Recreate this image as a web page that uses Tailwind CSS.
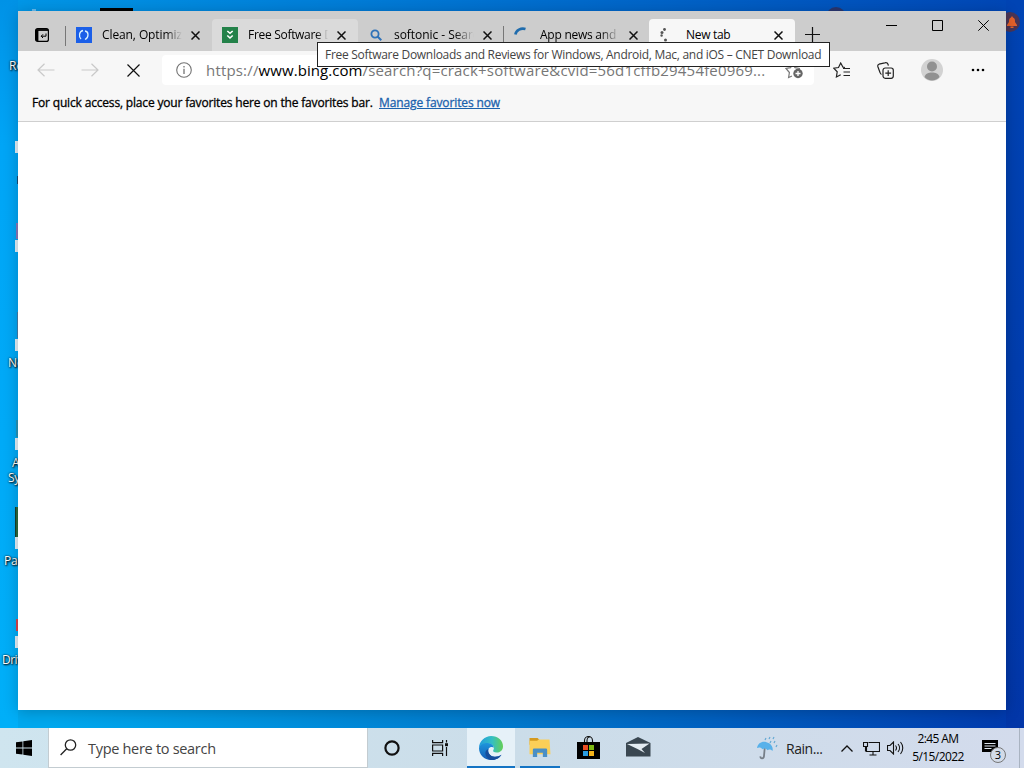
<!DOCTYPE html>
<html lang="en">
<head>
    <meta charset="UTF-8">
    <meta name="viewport" content="width=device-width, initial-scale=1.0">
    <title>New tab</title>
    <script src="https://cdn.jsdelivr.net/npm/@tailwindcss/browser@4"></script>
</head>
<body class="relative w-[1024px] h-[768px] overflow-hidden flex flex-col font-['Open_Sans','Noto_Sans',sans-serif] text-black">

<!-- Desktop -->
<main class="relative h-[728px] overflow-hidden bg-linear-to-r from-[#00a8ee] from-5% via-[#0078cc] via-50% to-[#0038ad]">
    <div class="absolute inset-x-0 top-0 h-[11px] bg-linear-to-r from-[#0098e8] via-[#0078d5] via-40% to-[#0045b5]"></div>
    <div class="absolute left-0 top-0 w-[18px] h-[728px] bg-linear-to-b from-[#0092e6] via-[#00a5f6] via-20% to-[#00aff8]"></div>
    <div class="absolute right-0 top-0 w-[18px] h-[728px] bg-linear-to-b from-[#0044b4] to-[#0236a8]"></div>

    <!-- Desktop icons -->
    <div class="absolute left-[100px] top-[8px] w-[33px] h-[3px] bg-black"></div>
    <div class="absolute left-[32px] top-[9px] w-[4px] h-[2px] bg-[#65bcf0]"></div>
    <div class="absolute left-[826px] top-[7px] size-5 rounded-full bg-[#29366f]"></div>
    <div class="absolute left-[1000px] top-[12px] size-5 rounded-full bg-[#4b3555] flex items-center justify-center pl-1">
        <svg class="w-3 h-3" viewBox="0 0 12 12"><path d="M6 0 7 1.5C9 2 9 4 9 6l2 3v1H1V9l2-3c0-2 0-4 2-4.500zM4.500 10.500h3V12h-3z" fill="#e8622a"/></svg>
    </div>
    <div class="absolute left-0 top-0 w-[60px] h-[728px] text-[12px] leading-[15px] text-white whitespace-nowrap [text-shadow:1px_1px_2px_#000,0_0_2px_#000]">
        <span class="absolute left-[9px] top-[58px]">Re</span>
        <span class="absolute left-[8px] top-[355px]">Ne</span>
        <span class="absolute left-[12px] top-[455px]">Ad</span>
        <span class="absolute left-[8px] top-[470px] tracking-[-0.3px]">Sys</span>
        <span class="absolute left-[4px] top-[553px] tracking-[-0.3px]">Pan</span>
        <span class="absolute left-[2px] top-[652px] tracking-[-0.5px]">Driv</span>
        <div class="absolute left-[15px] top-[141px] w-3 h-3 bg-[#e4f0f8]"></div>
        <div class="absolute left-[17px] top-[176px] w-3 h-2 bg-[#174b78]"></div>
        <div class="absolute left-[16px] top-[223px] w-3 h-4 bg-[#8a78b8]"></div>
        <div class="absolute left-[15px] top-[240px] w-3 h-3 bg-[#e4f0f8]"></div>
        <div class="absolute left-[17px] top-[312px] w-3 h-[26px] bg-[#447eab]"></div>
        <div class="absolute left-[15px] top-[339px] w-3 h-3 bg-[#e4f0f8]"></div>
        <div class="absolute left-[16px] top-[420px] w-3 h-[17px] bg-[#2795b8]"></div>
        <div class="absolute left-[15px] top-[438px] w-3 h-3 bg-[#e4f0f8]"></div>
        <div class="absolute left-[15px] top-[507px] w-3 h-[30px] bg-[#2c6a3c] border-l border-[#173f2c]"></div>
        <div class="absolute left-[15px] top-[537px] w-3 h-3 bg-[#e4f0f8]"></div>
        <div class="absolute left-[16px] top-[619px] w-3 h-3 bg-[#d9444c]"></div>
        <div class="absolute left-[15px] top-[636px] w-3 h-3 bg-[#e4f0f8]"></div>
    </div>

    <!-- Browser window -->
    <section class="absolute left-[18px] top-[11px] w-[988px] h-[699px] bg-white flex flex-col shadow-[0_2px_14px_rgba(0,0,0,0.22)]">

        <!-- Tab strip -->
        <div class="flex h-10 bg-[#cdcdcd] shrink-0 text-[12px]">
            <div class="w-12 h-full pt-[17px] pl-[17px] relative">
                <svg class="w-[14px] h-[14px]" viewBox="0 0 14 14" fill="none" stroke="#000"><rect x=".6" y=".6" width="12.800" height="12.800" rx="2" stroke-width="1.200"/><path d="M1 2h12" stroke-width="1.800"/><path d="M2.200 2v11" stroke-width="2.400"/><path d="M11 5.500v2.700H6.200M8 6.300 6.200 8.200 8 10"/></svg>
                <div class="absolute right-0 top-[15px] w-px h-5 bg-[#777]"></div>
            </div>
            <div class="w-[146px] pt-2 flex">
                <div class="flex items-center h-8 w-full pl-[10px]">
                    <svg class="size-4 shrink-0" viewBox="0 0 16 16"><path d="M0 0h16v16H0z" fill="#1b5fe8"/><path d="M7 3.500C3 4.500 2.500 9.500 5 12M9 4c4 .5 4 6.500 0 8.500" fill="none" stroke="#d8f1ff" stroke-width="1.300"/></svg>
                    <span class="ml-[10px] w-[80px] overflow-hidden whitespace-nowrap tracking-[-0.1px] mask-r-from-80%">Clean, Optimize</span>
                    <svg class="ml-[9px] size-[9px] shrink-0" viewBox="0 0 9 9"><path d="m.5.5 8 8m0-8-8 8" stroke="#111" stroke-width="1.500"/></svg>
                </div>
            </div>
            <div class="w-[146px] pt-2 flex">
                <div class="flex items-center h-8 w-full pl-[10px] bg-[#dadada] rounded-t">
                    <svg class="size-4 shrink-0" viewBox="0 0 16 16"><path d="M0 0h16v16H0z" fill="#24824a"/><path d="m5.300 4 2.700 2.300L10.700 4M5.300 8.500 8 11l2.700-2.500" fill="none" stroke="#fff" stroke-width="1.600"/></svg>
                    <span class="ml-[10px] w-[80px] overflow-hidden whitespace-nowrap tracking-[-0.3px] mask-r-from-85%">Free Software D</span>
                    <svg class="ml-[9px] size-[9px] shrink-0" viewBox="0 0 9 9"><path d="m.5.5 8 8m0-8-8 8" stroke="#111" stroke-width="1.500"/></svg>
                </div>
            </div>
            <div class="w-[146px] pt-2 flex relative">
                <div class="flex items-center h-8 w-full pl-[10px]">
                    <svg class="size-4 shrink-0" viewBox="0 0 16 16" fill="none" stroke="#2f72b8" stroke-width="1.800"><circle cx="7" cy="7" r="3.600"/><path d="m9.500 9.500 3.800 3.800" stroke-width="2"/></svg>
                    <span class="ml-[10px] w-[80px] overflow-hidden whitespace-nowrap tracking-[-0.05px] mask-r-from-75%">softonic - Search</span>
                    <svg class="ml-[9px] size-[9px] shrink-0" viewBox="0 0 9 9"><path d="m.5.5 8 8m0-8-8 8" stroke="#111" stroke-width="1.500"/></svg>
                </div>
                <div class="absolute right-0 top-[15px] w-px h-5 bg-[#777]"></div>
            </div>
            <div class="w-[145px] pt-2 flex">
                <div class="flex items-center h-8 w-full pl-[10px]">
                    <svg class="size-4 shrink-0" viewBox="0 0 16 16" fill="none" stroke="#1f6cad" stroke-width="2.600"><path d="M1.400 7.500C2 3 7 .7 11.500 2"/></svg>
                    <span class="ml-[10px] w-[80px] overflow-hidden whitespace-nowrap tracking-[-0.25px] mask-r-from-75%">App news and re</span>
                    <svg class="ml-[9px] size-[9px] shrink-0" viewBox="0 0 9 9"><path d="m.5.5 8 8m0-8-8 8" stroke="#111" stroke-width="1.500"/></svg>
                </div>
            </div>
            <div class="w-[146px] pt-2 flex">
                <div class="flex items-center h-8 w-full pl-[10px] bg-[#f7f7f7] rounded-t">
                    <svg class="size-4 shrink-0" viewBox="0 0 16 16" fill="#555"><circle cx="5.500" cy="2.500" r="1.400"/><circle cx="3" cy="5.500" r="1.500"/><circle cx="2.600" cy="8.500" r="1.200"/><circle cx="6.500" cy="13" r="1.500"/></svg>
                    <span class="ml-[11px] w-[79px] whitespace-nowrap tracking-[-0.3px]">New tab</span>
                    <svg class="ml-[9px] size-[9px] shrink-0" viewBox="0 0 9 9"><path d="m.5.5 8 8m0-8-8 8" stroke="#111" stroke-width="1.500"/></svg>
                </div>
            </div>
            <svg class="ml-[10px] mt-4 size-[15px]" viewBox="0 0 15 15"><path d="M7.500 0v15M0 7.500h15" stroke="#111" stroke-width="1.200"/></svg>
            <div class="ml-auto mr-[17px] mt-[9px] flex gap-[35px]">
                <svg class="size-[11px]" viewBox="0 0 11 11"><path d="M0 5.500h11" stroke="#000"/></svg>
                <svg class="size-[11px]" viewBox="0 0 11 11"><path d="M.5.5h10v10H.5z" fill="none" stroke="#000"/></svg>
                <svg class="size-[11px]" viewBox="0 0 11 11"><path d="m.3.300 10.400 10.400m0-10.400L.3 10.700" stroke="#000"/></svg>
            </div>
        </div>

        <!-- Address bar -->
        <div class="h-[38px] bg-[#f7f7f7] shrink-0 flex items-center">
            <svg class="ml-[19px] w-[18px] h-[14px]" viewBox="0 0 18 14" fill="none" stroke="#c9c9c9" stroke-width="1.200"><path d="M17.500 7H1M7.500.7 1 7l6.500 6.300"/></svg>
            <svg class="ml-[26px] w-[18px] h-[14px]" viewBox="0 0 18 14" fill="none" stroke="#c9c9c9" stroke-width="1.200"><path d="M.5 7H17M10.500.7 17 7l-6.500 6.300"/></svg>
            <svg class="ml-[28px] size-[13px]" viewBox="0 0 13 13"><path d="m.5.5 12 12m0-12-12 12" stroke="#111" stroke-width="1.200"/></svg>
            <div class="ml-[22px] w-[652px] h-[30px] bg-white rounded-sm flex items-center pl-[14px]">
                <svg class="size-4 shrink-0" viewBox="0 0 16 16" fill="none" stroke="#747474" stroke-width="1.100"><circle cx="8" cy="8" r="7.300"/><path d="M8 6.700V12M8 4v1.400" stroke-width="1.300"/></svg>
                <span class="ml-[14px] w-[564px] whitespace-nowrap text-[15px] tracking-[0.18px] text-[#777]">https://<span class="text-black tracking-[0.06px]">www.bing.com</span>/search?q=crack+software&amp;cvid=56d1cffb29454fe0969...</span>
                <svg class="ml-[15px] w-[18px] h-[18px]" viewBox="0 0 18 18"><path d="M7 15 3.600 16.500l.8-5L1 7.500l4.500-.8L8 2.500l2 4.200 5 .8" fill="none" stroke="#777" stroke-width="1.200"/><circle cx="13" cy="12.500" r="4.700" fill="#666"/><path d="M13 10v5M10.500 12.500h5" stroke="#fff" stroke-width="1.300"/></svg>
            </div>
            <svg class="ml-[19px] w-[17px] h-[17px]" viewBox="0 0 17 17" fill="none" stroke="#222" stroke-width="1.200"><path d="m12 5.500-2-.3L7.700 1 5.500 5.500.7 6.200l3.500 3.600-.8 5.200 4.300-2.300"/><path d="M10 6.500h7M10.500 10h6.500M10.500 13.500h6.500"/></svg>
            <svg class="ml-[27px] w-[17px] h-[17px]" viewBox="0 0 17 17" fill="none" stroke="#222" stroke-width="1.200"><path d="M4.500 12.500c-1-.5-1.200-1.200-1.500-2L.9 4.700C.5 3.300 1 2.500 2 2.200L7.800.8c1.500-.4 2.700 0 3.200 1.500l.4 1.400"/><rect x="6" y="6" width="10.300" height="10.300" rx="2.200"/><path d="M11.200 8.300v5.800M8.300 11.200h5.800"/></svg>
            <svg class="ml-[27px] w-[22px] h-[22px]" viewBox="0 0 22 22"><circle cx="11" cy="11" r="11" fill="#d2d2d2"/><circle cx="11" cy="7.500" r="5" fill="#919191"/><path d="M3.500 18c1-3.500 4-4.500 7.500-4.500s6.500 1 7.500 4.500c-3.500 4.500-11.500 4.500-15 0z" fill="#919191"/></svg>
            <svg class="ml-[28px] w-[14px] h-[4px]" viewBox="0 0 14 4"><circle cx="2" cy="2" r="1.300"/><circle cx="7" cy="2" r="1.300"/><circle cx="12" cy="2" r="1.300"/></svg>
        </div>

        <!-- Favorites bar -->
        <div class="h-[33px] bg-[#f7f7f7] border-b border-[#cfcfcf] shrink-0 pl-[14px] pt-[5px] flex text-[12px] leading-[18px] whitespace-nowrap [-webkit-text-stroke:0.3px]">
            <span class="w-[347px] tracking-[-0.17px]">For quick access, place your favorites here on the favorites bar.</span>
            <a href="#" class="text-[#1b62ad] underline tracking-[-0.12px]">Manage favorites now</a>
        </div>
    </section>

    <!-- Tab tooltip -->
    <div class="absolute left-[317px] top-[42px] w-[513px] h-[25px] bg-white border border-[#222] pl-[7px] text-[12px] leading-[24px] text-[#444] whitespace-nowrap tracking-[-0.29px]">Free Software Downloads and Reviews for Windows, Android, Mac, and iOS – CNET Download</div>
</main>

<!-- Taskbar -->
<footer class="h-10 flex items-center bg-linear-to-r from-[#cfe5ef] via-[#cbdde9] to-[#d3dbec]">
    <div class="w-12 flex justify-center">
        <svg class="size-4" viewBox="0 0 16 16"><path d="m0 2.300 6.500-.9v6.200H0zM7.300 1.300 16 0v7.600H7.300zM0 8.400h6.500v6.200L0 13.700zM7.300 8.400H16V16l-8.700-1.200z"/></svg>
    </div>
    <div class="w-80 h-10 bg-white border border-[#c3ccd1] border-t-0 flex items-center pl-[11px]">
        <svg class="w-[17px] h-[17px]" viewBox="0 0 17 17" fill="none" stroke="#222" stroke-width="1.300"><circle cx="10.500" cy="6" r="5.200"/><path d="M6.700 9.800.6 16"/></svg>
        <span class="ml-[11px] mt-0.5 text-[14.500px] text-[#444] tracking-[-0.3px]">Type here to search</span>
    </div>
    <div class="w-12 flex justify-center">
        <svg class="size-4" viewBox="0 0 16 16"><circle cx="8" cy="8" r="6.600" fill="none" stroke="#111" stroke-width="2.200"/></svg>
    </div>
    <div class="w-[51px] flex justify-center">
        <svg class="w-4 h-4 mr-[3px]" viewBox="0 0 16 16" fill="none" stroke="#111" stroke-width="1.200"><path d="M.6 0v2.600h10V0M.6 16v-2.600h10V16M.6 5h10v6H.6zM14.500 0v2.500M14.500 7v9"/><path d="M13 3.200h3v3h-3z" fill="#111" stroke="none"/></svg>
    </div>
    <div class="w-12 h-10 bg-[#e6f1f8] border-b-2 border-[#1474c4] flex justify-center items-center">
        <svg class="size-6 mt-0.5" viewBox="0 0 24 24">
            <defs>
                <linearGradient id="edge-top" x1="0" x2="1"><stop offset="0" stop-color="#229cdd"/><stop offset=".55" stop-color="#34bfc2"/><stop offset="1" stop-color="#65cf55"/></linearGradient>
                <linearGradient id="edge-left" x1="0" x2="0" y1="0" y2="1"><stop offset="0" stop-color="#1d96dc"/><stop offset="1" stop-color="#155bb6"/></linearGradient>
            </defs>
            <path d="M0 12C0 5 6 0 12.200 0 19 0 24 4.600 24 10.200c0 4-2.800 6.300-6.300 6.300-3 0-4.200-1.300-3.400-2.300 2-3-1-6.700-4.800-6.700C5 7.500 1 9.500 0 12z" fill="url(#edge-top)"/>
            <path d="M0 12C.6 9 4.500 6.600 9 7c3.500.3 5.700 2.400 5.800 4.700-1-1.200-4.300-1-5.300 1.300-1.300 3.300 1.500 7.500 6 7.700 3 .2 5-.8 7-2C20.500 22 16.800 24 12 24 5.200 24 0 18.800 0 12z" fill="url(#edge-left)"/>
            <path d="M9.500 13c-1.300 3.300 1.500 7.500 6 7.700 3 .2 5-.8 7-2-3 5-8.500 5.600-11.500 5C6.500 22 4 15 9.500 13z" fill="#174d9c"/>
        </svg>
    </div>
    <div class="w-[50px] h-10 px-[5px]">
        <div class="h-10 border-b-2 border-[#1474c4] flex items-center justify-center">
            <svg class="w-[22px] h-[20px] mt-0.5" viewBox="0 0 22 21"><path d="M0 0h8.500l2 2H20v5H0z" fill="#d59a1e"/><path d="M0 3h8l1.500-1.500H21l1 15.500H0z" fill="#fbcf58"/><path d="M3.500 20v-7.500c0-1 .7-1.500 1.500-1.500h12c.8 0 1.500.5 1.500 1.500V20H14v-4.500H8V20z" fill="#4a8fc5"/></svg>
        </div>
    </div>
    <div class="w-[46px] flex justify-center">
        <svg class="w-[23px] h-[24px] ml-[1px]" viewBox="0 0 23 24"><path d="M7.500 7V4.500a4 4 0 0 1 8 0V7M10 7V4.500C10 2 12 .8 13.500.8" fill="none" stroke="#111" stroke-width="1.100"/><path d="M0 6h23v17H0z"/><path d="M6 9h5v5H6z" fill="#e84c22"/><path d="M12 9h5v5h-5z" fill="#7db913"/><path d="M6 15h5v5H6z" fill="#2b9de0"/><path d="M12 15h5v5h-5z" fill="#f5b51b"/></svg>
    </div>
    <div class="w-[52px] flex justify-center">
        <svg class="w-[25px] h-[20px] mb-[3px] ml-0.5" viewBox="0 0 25 20"><path d="M0 6 12 0l12.500 6v13.500H0z" fill="#3a4751"/><path d="m1 7 22.500-.5L15.500 12l3.500 4-7.500-4z" fill="#e4ecf2"/></svg>
    </div>
    <div class="ml-[93px] flex items-center w-[85px]">
        <svg class="w-6 h-6" viewBox="0 0 24 24"><path d="M9 9 8 20c0 3-4 3-3.500.3" fill="none" stroke="#777f88" stroke-width="1.800"/><path d="M1 12C2 7 6 5 10.500 6.200 15 7.500 17.500 11 16.500 15c-2-1.700-3.500-1.800-5-.8-1.500-2-3-2.200-5-1-1.500-2-3.500-2-5.500-1.200z" fill="#58b1ea"/><path d="m10 2-1 2M14 1l-1 2M18 1l-1 2M15 5l-1 2M19 5l-1 2M21 9l-1 2" stroke="#65a9d4" stroke-width="1.200"/></svg>
        <span class="ml-[6px] text-[14px] tracking-[-0.45px] text-[#222]">Rain...</span>
    </div>
    <svg class="w-3 h-[7px]" viewBox="0 0 12 7"><path d="M.5 6.500 6 1l5.500 5.500" fill="none" stroke="#111" stroke-width="1.300"/></svg>
    <svg class="ml-[10px] w-[17px] h-[15px]" viewBox="0 0 17 15" fill="none" stroke="#111" stroke-width="1.100"><path d="M5.500 1.500h11v9H3.500V6M10 10.500V14M6.500 14h7M.5 1.500h4v4h-4zM2.500 5.500v5"/></svg>
    <svg class="ml-[7px] w-[17px] h-[14px]" viewBox="0 0 17 14" fill="none" stroke="#111" stroke-width="1.100"><path d="M.5 4.500H3L6.500 1v12L3 9.500H.5zM8.500 4.500c1.200 1.500 1.200 3.500 0 5M11 3c2 2.300 2 5.700 0 8M13.500 1c3 3.500 3 8.500 0 12"/></svg>
    <div class="ml-[3px] w-[62px] text-center text-[12px] leading-[18px] tracking-[-0.6px] whitespace-nowrap">
        <div>2:45 AM</div>
        <div>5/15/2022</div>
    </div>
    <div class="relative ml-[13px] w-6 h-8">
        <svg class="absolute left-0 top-[8px] w-4 h-4" viewBox="0 0 16 16"><path d="M0 0h16v12h-3v4l-4-4H0z"/><path d="M2.500 3.500h11M2.500 6h11M2.500 8.500h7" stroke="#dce4ef"/></svg>
        <div class="absolute left-[8px] top-[15px] size-4 rounded-full border border-[#777] bg-[#d3dbe8] text-[11px] leading-[14px] text-center">3</div>
    </div>
    <div class="ml-auto mr-1 w-px h-10 bg-[#a9b3c1]"></div>
</footer>

</body>
</html>
